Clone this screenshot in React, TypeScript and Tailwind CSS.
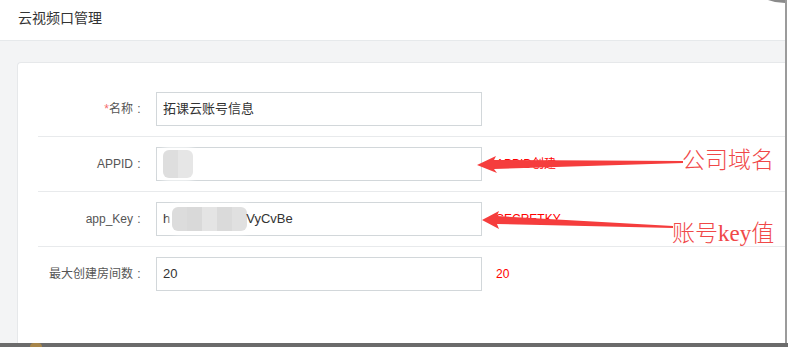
const font = "font-['Liberation_Sans','Noto_Sans_CJK_SC',sans-serif]";

function Mosaic({ cells, h = "h-[26px]", className = "" }: { cells: string[]; h?: string; className?: string }) {
  return (
    <span className={`inline-flex ${h} overflow-hidden rounded-[6px] shadow-[0_0_5px_3px_rgba(255,255,255,0.9)] ${className}`}>
      {cells.map((c, i) => (
        <span key={i} className="h-full w-[15px]" style={{ backgroundColor: c }} />
      ))}
    </span>
  );
}

function Row({
  label,
  required,
  children,
  hint,
  last,
}: {
  label: string;
  required?: boolean;
  children: React.ReactNode;
  hint?: string;
  last?: boolean;
}) {
  return (
    <div className={`flex items-center py-[10px] ${last ? "" : "border-b border-[#e8eaec]"}`}>
      <div className="flex w-[107px] items-center justify-end text-[12px] text-[#555]">
        {required && <span className="text-[#f56c6c]">*</span>}
        {label}
        <span className="w-[12px] text-center">:</span>
      </div>
      <div className="ml-[11px] flex h-[34px] w-[326px] items-center border border-[#d2d7da] px-[6px] text-[13px] text-[#333]">
        {children}
      </div>
      {hint && <div className="ml-[14px] text-[12px] text-[#ff0000]">{hint}</div>}
    </div>
  );
}

export default function App() {
  return (
    <div className={`relative h-[347px] w-[788px] overflow-hidden bg-white ${font}`}>
      <div className="flex h-[343px] w-[787px] flex-col border-r-2 border-[#9b9b9b]">
        <div className="flex h-[41px] shrink-0 items-center border-b border-[#e6e9eb] px-[18px] pb-[3px] text-[14px] text-[#333]">
          云视频口管理
        </div>
        <div className="flex flex-1 flex-col bg-[#f3f4f5] pl-[17px] pt-[21px]">
          <div className="flex-1 rounded-tl-[4px] border-l border-t border-[#e6e8ea] bg-white pl-[20px] pt-[19px]">
            <Row label="名称" required>
              拓课云账号信息
            </Row>
            <Row label="APPID" hint="APPID创建">
              <Mosaic cells={["#dedede", "#e6e6e6"]} h="h-[28px]" />
            </Row>
            <Row label="app_Key" hint="SECRETKY">
              <span>h</span>
              <Mosaic cells={["#dcdcdc", "#d9d9d9", "#e4e4e4", "#dadada", "#e0e0e0"]} h="h-[24px]" className="ml-[2px]" />
              <span className="-ml-[1px]">VyCvBe</span>
            </Row>
            <Row label="最大创建房间数" hint="20" last>
              20
            </Row>
          </div>
        </div>
      </div>
      <div className="flex h-[4px] items-center bg-[#6b6b6b]">
        <span className="ml-[30px] h-[4px] w-[12px] rounded-t-full bg-[#a8864a]" />
      </div>

      {/* annotation layer */}
      <svg className="absolute left-0 top-0" width="788" height="347" viewBox="0 0 788 347">
        <polygon points="768,0 785,0 785,3 775,2" fill="#8a8a8a" />
        <polygon
          points="477,165 496,156 494,160 683,161 683,163 494,169 497,173"
          fill="#f53d3d"
        />
        <polygon
          points="482,220 499,211 497,216 673,226 673,228 497,224 499,229"
          fill="#f53d3d"
        />
      </svg>
      <div className="absolute left-[682px] top-[146px] font-['Liberation_Serif','Noto_Sans_CJK_SC',serif] text-[23px] font-light leading-[30px] text-[#f04848]">
        公司域名
      </div>
      <div className="absolute left-[672px] top-[219px] font-['Liberation_Serif','Noto_Sans_CJK_SC',serif] text-[23px] font-light leading-[30px] text-[#f04848]">
        账号key值
      </div>
    </div>
  );
}
